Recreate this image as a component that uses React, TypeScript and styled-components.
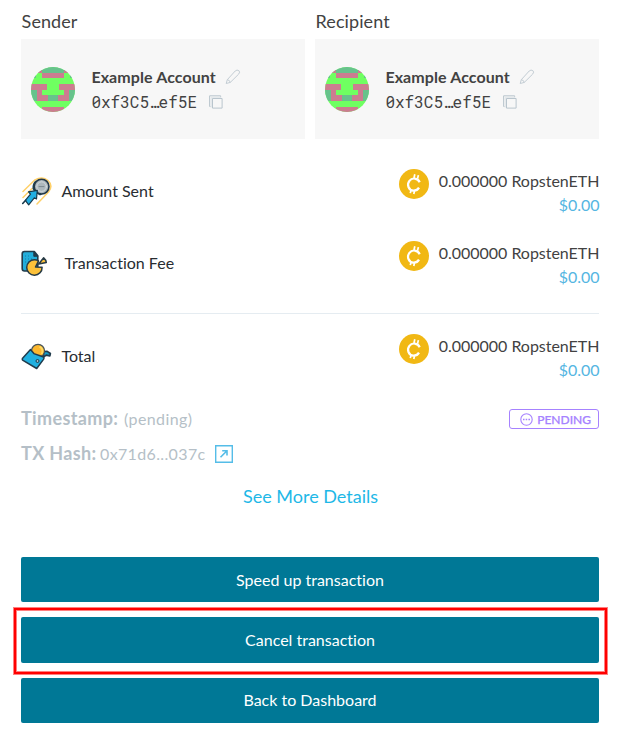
import React from 'react';
import styled, { createGlobalStyle } from 'styled-components';

const GlobalStyle = createGlobalStyle`
  * { box-sizing: border-box; }
  body { margin: 0; background: #fff; }
`;

const Page = styled.main`
  width: 620px;
  height: 748px;
  padding: 0 21px;
  overflow: hidden;
  background: #fff;
  color: #424242;
  font: 16px/24px Lato, sans-serif;
  font-variant-ligatures: none;
`;
const Parties = styled.section`
  display: grid;
  grid-template-columns: 284px 284px;
  gap: 10px;
`;
const PartyTitle = styled.h2`
  margin: 0;
  height: 39px;
  padding: 9px 0 0 0.6px;
  font-size: 18px;
  font-weight: 400;
  line-height: 24px;
  letter-spacing: 0.08px;
`;
const AccountCard = styled.div`
  display: flex;
  align-items: center;
  height: 100px;
  padding-left: 10px;
  background: #f7f7f7;
  svg { display: block; flex: none; }
`;
const AccountText = styled.div`
  margin-left: 16.4px;
`;
const Line = styled.div`
  display: flex;
  align-items: center;
  height: 25px;
`;
const Name = styled.strong`
  width: 125px;
  margin-right: 8.6px;
  font-weight: 700;
  letter-spacing: 0.09px;
  white-space: nowrap;
`;
const Address = styled.span`
  width: 106px;
  margin-right: 11.6px;
  font: 16px/24px "Roboto Mono", "Liberation Mono", monospace;
  white-space: nowrap;
`;
const AmountRow = styled.div<{ $top: number }>`
  display: flex;
  height: 48px;
  margin-top: ${p => p.$top}px;
`;
const RowLabel = styled.div<{ $gap: number }>`
  display: flex;
  flex: 1;
  align-items: center;
  gap: ${p => p.$gap}px;
  padding-bottom: 4px;
  color: #282d32;
  svg { display: block; margin-top: 2px; }
`;
const Coin = styled.div`
  width: 30px;
  height: 30px;
  svg { display: block; }
`;
const Values = styled.div`
  width: 170px;
  margin-right: -0.4px;
  letter-spacing: -0.03px;
  text-align: right;
  white-space: nowrap;
`;
const Fiat = styled.div`
  color: #55b6e2;
`;
const Divider = styled.hr`
  height: 1px;
  margin: 24px 0 0;
  border: 0;
  background: #e5ecf1;
`;
const MetaRow = styled.div<{ $top: number }>`
  display: flex;
  align-items: center;
  height: 24px;
  margin-top: ${p => p.$top}px;
  color: #b5bfc7;
`;
const MetaLabel = styled.strong<{ $width: number }>`
  width: ${p => p.$width}px;
  padding-bottom: 2px;
  font-size: 18px;
  font-weight: 700;
  letter-spacing: 0.36px;
  white-space: nowrap;
`;
const MetaValue = styled.span<{ $spacing: number }>`
  letter-spacing: ${p => p.$spacing}px;
`;
const LinkIcon = styled.a`
  margin-left: 9px;
  svg { display: block; }
`;
const Badge = styled.span`
  display: flex;
  align-items: center;
  justify-content: flex-end;
  gap: 4px;
  width: 90px;
  height: 20px;
  margin-left: auto;
  padding: 1px 7px 0 0;
  border: 1px solid #a682ff;
  border-radius: 3px;
  color: #a682ff;
  font-size: 12px;
  font-weight: 500;
  -webkit-text-stroke: 0.25px #a682ff;
`;
const DetailsLink = styled.a`
  display: block;
  margin-top: 18px;
  padding-left: 1px;
  color: #1eb8e7;
  font-size: 18px;
  text-align: center;
`;
const Actions = styled.div`
  display: flex;
  flex-direction: column;
  gap: 15px;
  margin-top: 49px;
`;
const Action = styled.button<{ $height?: number; $lift?: number }>`
  width: 100%;
  height: ${p => p.$height ?? 45}px;
  padding: 0 0 ${p => p.$lift ?? 0}px;
  border: 0;
  border-radius: 2px;
  background: #007896;
  color: #fff;
  font: 16px/24px Lato, sans-serif;
  font-variant-ligatures: none;
`;
const Highlight = styled.div`
  position: relative;
  display: flex;
  &::after {
    content: '';
    position: absolute;
    inset: -9px -8px -11px -7px;
    border: 2px solid #f00;
    box-shadow: 0 0 0 1px rgba(255, 0, 0, .5), inset 0 0 0 1px rgba(255, 0, 0, .5);
    pointer-events: none;
  }
`;

const Identicon = ({ id }: { id: string }) => (
  <svg width="44" height="45" viewBox="0 0 44 45">
    <clipPath id={id}><ellipse cx="22" cy="22.5" rx="22" ry="22.5" /></clipPath>
    <g clipPath={`url(#${id})`} shapeRendering="crispEdges">
      <path d="M0 0h44v45H0z" fill="#6fff61" />
      <path d="M0 0h44v6H0z M0 6h5v5H0z M39 6h5v5h-5z M0 23h6v11H0z M38 23h6v11h-6z M17 28h10v6H17z" fill="#67c28c" />
      <path d="M5 0h6v6H5z M33 0h6v6h-6z M11 6h22v5H11z M0 17h16v6H0z M28 17h16v6H28z M6 23h5v5H6z M33 23h5v5h-5z M6 28h11v6H6z M27 28h11v6H27z M11 40h22v5H11z" fill="#cc7c90" />
    </g>
  </svg>
);

const PencilIcon = () => (
  <svg width="16" height="16" viewBox="0 0 16 16" fill="none" stroke="#c3cdd4" strokeLinejoin="round">
    <path d="M1.2 14.5 2.3 10.7 10.2 2Q12 .3 13.8 1.6T13.6 5.2L5.3 13.4Z M2.3 10.7Q4.7 11 5.3 13.4" />
  </svg>
);
const CopyIcon = () => (
  <svg width="14" height="14" viewBox="0 0 14 14" fill="none" stroke="#b9c5cd">
    <path d="M3.5 3.5h9.6v9.6H3.5z M1.5 11.5H.6V.8h11v1.4" />
    <path d="M2.2 2.5v10M2.2 2.2h10" stroke="#dce2e6" />
  </svg>
);

const SentIcon = () => (
  <svg width="31" height="32" viewBox="0 0 31 32" fill="none" strokeLinecap="round" strokeLinejoin="round">
    <path d="M2 15.5 13.5 4.2Q21.5-.5 27 4.5T27.5 16L16 28 M2 21.5 11 12.5" stroke="#ffd068" strokeWidth="1.5" />
    <path d="M11.5 13Q11 6.5 15 4.5L25 16l-6 3.5-5-3Z" fill="#1d4253" />
    <circle cx="20.6" cy="10.6" r="7.4" fill="#adb8bd" stroke="#233847" strokeWidth="1.6" />
    <circle cx="20.6" cy="10.6" r="4.8" stroke="#d4dade" />
    <path d="M18 10.6h5" stroke="#7b8990" />
    <path d="m7.5 15.8 8.8-1.4-.8 8.6-2.2-1.2-5.6 7-3.4-4.4 5.2-6.2Z" fill="#20aee3" stroke="#17384a" strokeWidth="1.2" />
    <path d="m1.7 27.5 3-3.2" stroke="#17384a" strokeWidth="1.6" />
  </svg>
);
const FeeIcon = () => (
  <svg width="28" height="28" viewBox="0 0 28 28" fill="none" strokeLinejoin="round">
    <path d="M3.5 1.5h9.8l3.5 4.3V21H3.5Q1.2 21 1.2 18.5V3.8Q1.2 1.5 3.5 1.5Z" fill="#23aedb" stroke="#223c4c" strokeWidth="1.6" />
    <path d="M12.8 1.5v4.8h4Z" fill="#223c4c" stroke="#223c4c" />
    <path d="M4 6h6M4 9h8M4 12h4" stroke="#127fa5" strokeDasharray="1 2" />
    <path d="M13.5 9.8a7.7 7.7 0 1 0 7.6 7.4l-6.6-.2 3-6.1a8 8 0 0 0-4-1.1Z" fill="#fcc13a" stroke="#283b45" strokeWidth="1.5" />
    <path d="m17.7 14 5-6.2q2.3 1.9 2.6 4.7Z" fill="#fcc13a" stroke="#283b45" strokeWidth="1.5" />
  </svg>
);
const WalletIcon = () => (
  <svg width="31" height="28" viewBox="0 0 31 28" fill="none" strokeLinejoin="round">
    <path d="m23 8.5 3.2-.2 3.2 2.2-.5 2.4-3.7-.8-3 2.2Z" fill="#149dca" stroke="#203b4c" strokeWidth="1.6" />
    <circle cx="17" cy="7.8" r="6.5" fill="#fcb72d" stroke="#46545b" strokeWidth="1.2" />
    <path d="M18.5 3.6q4.5 2.2 2.2 7.6" stroke="#ffdb65" strokeWidth="1.8" />
    <path d="m9.5 6.6 3.4 4 9 3.2q1.8.8.6 2.6l-6.8 9.1L2 17.4q-1.2-.9-.4-2.2Z" fill="#20b0e0" stroke="#203b4c" strokeWidth="1.5" />
    <circle cx="16.5" cy="18" r="1.5" fill="#a7bdc5" stroke="#173b4e" />
  </svg>
);
const CoinIcon = () => (
  <svg width="30" height="30" viewBox="0 0 30 30" fill="none" stroke="#fff">
    <circle cx="15" cy="15" r="15" fill="#f1b814" stroke="none" />
    <path d="M20.7 13.2C18.8 8.8 13 8.3 10.4 11.8c-2.9 3.9-.8 9.4 3.8 9.8 2.5.2 4.7-1 5.8-3" strokeWidth="2.2" />
    <path d="m15 9 .8-3.7m2.7 4.5.9-3.7M12.2 20.5l-.9 3.6m4.3-2.7-.8 3.6" strokeWidth="1.7" />
  </svg>
);
const ExternalIcon = () => (
  <svg width="18" height="18" viewBox="0 0 18 18" fill="none" stroke="#55bde8">
    <path d="M.7.7h16.6v16.6H.7z" strokeWidth="1.4" />
    <path d="M5.5 12.2 12 5.7M7.2 5.7H12v4.8" strokeWidth="1.6" />
  </svg>
);
const PendingIcon = () => (
  <svg width="13" height="13" viewBox="0 0 13 13" fill="none" stroke="#a682ff">
    <circle cx="6.5" cy="6.5" r="5.7" strokeWidth="1.1" />
    <path d="M3 6.5h1.5m1.2 0h1.5m1.2 0H10" strokeWidth="1.5" />
  </svg>
);

const Party = ({ title }: { title: string }) => (
  <div>
    <PartyTitle>{title}</PartyTitle>
    <AccountCard>
      <Identicon id={`avatar-${title}`} />
      <AccountText>
        <Line><Name>Example Account</Name><PencilIcon /></Line>
        <Line><Address>0xf3C5…ef5E</Address><CopyIcon /></Line>
      </AccountText>
    </AccountCard>
  </div>
);

interface AmountProps {
  label: string;
  icon: React.ReactNode;
  top: number;
  gap?: number;
}
const Amount = ({ label, icon, top, gap = 9.4 }: AmountProps) => (
  <AmountRow $top={top}>
    <RowLabel $gap={gap}>{icon}<span>{label}</span></RowLabel>
    <Coin><CoinIcon /></Coin>
    <Values>
      <div>0.000000 RopstenETH</div>
      <Fiat>$0.00</Fiat>
    </Values>
  </AmountRow>
);

export default function App() {
  return (
    <Page>
      <GlobalStyle />
      <Parties>
        <Party title="Sender" />
        <Party title="Recipient" />
      </Parties>
      <Amount label="Amount Sent" icon={<SentIcon />} top={30} />
      <Amount label="Transaction Fee" icon={<FeeIcon />} top={24} gap={15.4} />
      <Divider />
      <Amount label="Total" icon={<WalletIcon />} top={20} />
      <MetaRow $top={25}>
        <MetaLabel $width={103}>Timestamp:</MetaLabel>
        <MetaValue $spacing={0.4}>(pending)</MetaValue>
        <Badge><PendingIcon />PENDING</Badge>
      </MetaRow>
      <MetaRow $top={11}>
        <MetaLabel $width={79}>TX Hash:</MetaLabel>
        <MetaValue $spacing={0.36}>0x71d6...037c</MetaValue>
        <LinkIcon><ExternalIcon /></LinkIcon>
      </MetaRow>
      <DetailsLink>See More Details</DetailsLink>
      <Actions>
        <Action>Speed up transaction</Action>
        <Highlight><Action $height={46}>Cancel transaction</Action></Highlight>
        <Action $lift={1}>Back to Dashboard</Action>
      </Actions>
    </Page>
  );
}
